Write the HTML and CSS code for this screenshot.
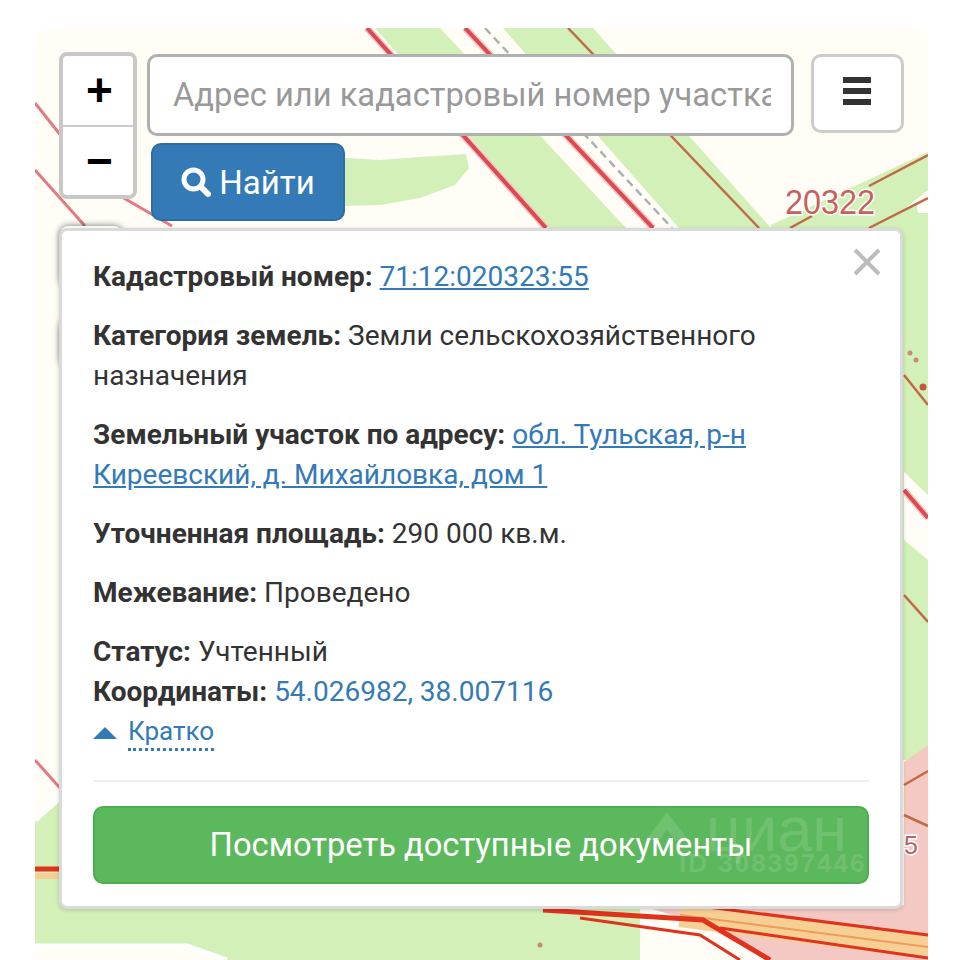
FILE: index.html
```html
<!DOCTYPE html>
<html lang="ru">
<head>
<meta charset="utf-8">
<title>Кадастровая карта</title>
<link rel="stylesheet" href="styles.css">
</head>
<body>
<main class="map">
  <svg class="map-art" viewBox="35 28 893 932" width="893" height="932" aria-hidden="true">
    <g class="green">
      <polygon points="375,28 440,28 626,228 549,228"/>
      <polygon points="503,28 593,28 771,228 679,228"/>
      <polygon points="345,158 380,160 420,157 466,154 469,168 455,185 420,198 380,205 345,206"/>
      <polygon points="771,225 928,152 928,190 880,228 771,228"/>
      <polygon points="870,228 928,196 928,760 870,760"/>
      <polygon points="35,820 60,795 60,960 35,960"/>
      <polygon points="35,905 640,905 640,960 35,960"/>
    </g>
    <polygon class="cream" points="904,472 928,495 928,560 904,540"/>
    <polygon class="cream" points="916,200 928,192 928,213 918,213"/>
    <polygon class="cream" points="35,945 187,945 227,960 35,960"/>
    <polygon class="pink" points="904,762 928,745 928,960 770,960 703,925 640,905 904,905"/>
    <polygon class="cream" points="639,925 706,938 766,960 648,960"/>
    <g class="halo">
      <line x1="367" y1="28" x2="546" y2="228"/>
      <line x1="465" y1="28" x2="653" y2="228"/>
      <line x1="904" y1="490" x2="928" y2="518"/>
    </g>
    <g class="red">
      <line x1="367" y1="28" x2="546" y2="228"/>
      <line x1="465" y1="28" x2="653" y2="228"/>
      <line x1="904" y1="490" x2="928" y2="518"/>
      <line class="thin" x1="35" y1="103" x2="62" y2="137"/>
      <line class="thin" x1="35" y1="170" x2="85" y2="226"/>
      <line class="thin" x1="122" y1="197" x2="172" y2="226"/>
      <line class="thin" x1="35" y1="760" x2="60" y2="788"/>
    </g>
    <line class="dash" x1="476" y1="28" x2="663" y2="228"/>
    <g class="brown">
      <line x1="568" y1="28" x2="759" y2="228"/>
      <line x1="869" y1="186" x2="928" y2="155"/>
      <line x1="869" y1="228" x2="928" y2="198"/>
      <line x1="790" y1="228" x2="812" y2="216"/>
      <line x1="904" y1="375" x2="928" y2="405"/>
      <line x1="904" y1="595" x2="928" y2="622"/>
      <line x1="904" y1="785" x2="928" y2="771"/>
      <line x1="904" y1="815" x2="928" y2="826"/>
    </g>
    <circle class="dot" cx="910" cy="353" r="2.5"/>
    <circle class="dot" cx="916" cy="360" r="2.5"/>
    <circle class="dot dot-strong" cx="923" cy="387" r="3.5"/>
    <circle class="dot" cx="540" cy="945" r="2.5"/>
    <polyline class="white-road" points="35,820 60,798"/>
    <polyline class="white-road" points="35,946 187,946 227,960"/>
    <polyline class="road-edge" points="35,869 60,869"/>
    <polyline class="road-orange" points="35,876 60,876"/>
    <polyline class="road-orange wide" points="680,915 928,947"/>
    <polyline class="road-stripe" points="680,915 928,947"/>
    <polyline class="road-edge" points="543,910 703,920 770,960"/>
    <polyline class="road-edge slim" points="580,918 700,935 740,960"/>
    <polyline class="road-edge slim" points="700,906 928,935"/>
    <polyline class="road-edge slim" points="720,928 928,958"/>
    <text class="map-label" x="785" y="214" textLength="90" lengthAdjust="spacingAndGlyphs">20322</text>
    <text class="map-label small" x="904" y="854">5</text>
  </svg>

  <div class="ghost ghost-top"></div>
  <div class="ghost ghost-mid"></div>

  <div class="overlay">
    <div class="controls">
      <div class="zoom">
        <button class="zoom-btn" type="button">+</button>
        <button class="zoom-btn" type="button">−</button>
      </div>
      <form class="search">
        <div class="search-row">
          <input class="search-input" type="text" placeholder="Адрес или кадастровый номер участка">
          <button class="menu-btn" type="button" aria-label="Меню">
            <svg viewBox="0 0 28 28" width="28" height="28"><path class="menu-icon" d="M0 0h28v6H0zM0 11h28v6H0zM0 22h28v6H0z"/></svg>
          </button>
        </div>
        <button class="find-btn" type="button">
          <svg viewBox="0 0 30 30" width="30" height="30"><circle class="find-ring" cx="12.5" cy="12.5" r="9.5"/><line class="find-handle" x1="19.5" y1="19.5" x2="27" y2="27"/></svg>
          Найти
        </button>
      </form>
    </div>

    <section class="popup">
      <button class="close" type="button" aria-label="Закрыть">
        <svg viewBox="0 0 28 28" width="28" height="28"><path class="close-icon" d="M2 2l24 24M26 2L2 26"/></svg>
      </button>
      <p class="field"><b>Кадастровый номер:</b> <a class="link" href="#">71:12:020323:55</a></p>
      <p class="field"><b>Категория земель:</b> Земли сельскохозяйственного назначения</p>
      <p class="field"><b>Земельный участок по адресу:</b> <a class="link" href="#">обл. Тульская, р-н Киреевский, д. Михайловка, дом 1</a></p>
      <p class="field"><b>Уточненная площадь:</b> 290 000 кв.м.</p>
      <p class="field"><b>Межевание:</b> Проведено</p>
      <p class="field tight"><b>Статус:</b> Учтенный</p>
      <p class="field tight"><b>Координаты:</b> <span class="coords">54.026982, 38.007116</span></p>
      <p class="toggle">
        <svg viewBox="0 0 24 12" width="24" height="12"><polygon class="toggle-arrow" points="12,0 24,12 0,12"/></svg>
        <a class="toggle-link" href="#">Кратко</a>
      </p>
      <hr class="rule">
      <button class="docs-btn" type="button">Посмотреть доступные документы</button>
      <div class="watermark">
        <svg viewBox="0 0 42 28" width="42" height="28"><polygon class="wm-roof" points="21,0 42,28 29,28 21,18 13,28 0,28"/></svg>
        <span class="wm-name">циан</span>
        <span class="wm-id">ID 308397446</span>
      </div>
    </section>
  </div>
</main>
</body>
</html>
```

FILE: styles.css
```css
* { box-sizing: border-box; }

html, body { height: 100%; }

body {
  margin: 0;
  background: #fff;
  font-family: Roboto, "Noto Sans", sans-serif;
  color: #333;
  overflow: hidden;
}

.map {
  position: relative;
  width: 893px;
  height: 932px;
  margin: 28px 0 0 35px;
  background: #fffdf6;
  border-radius: 16px 16px 0 0;
  overflow: hidden;
}

.map-art { position: absolute; inset: 0; display: block; }

.green polygon { fill: #d2f0b8; }
.cream { fill: #fffdf6; }
.pink { fill: #f4c9c4; }

.halo line { stroke: #f3c4c4; stroke-width: 7; }
.red line { stroke: #dc4a50; stroke-width: 4; }
.red line.thin { stroke: #e07c80; stroke-width: 3; }
.dash { stroke: #a9b2b4; stroke-width: 2.5; stroke-dasharray: 8 5; transform: translate(9px, 0); }
.brown line { stroke: #bf6a48; stroke-width: 2.5; }
.dot { fill: #c98a72; }
.dot-strong { fill: #c7553f; }

.white-road { fill: none; stroke: #fff; stroke-width: 5; }
.road-edge { fill: none; stroke: #e0321c; stroke-width: 5; }
.road-edge.slim { stroke-width: 3; }
.road-orange { fill: none; stroke: #f6cf95; stroke-width: 6; }
.road-orange.wide { stroke-width: 24; }
.road-stripe { fill: none; stroke: #ee9c58; stroke-width: 2; }

.map-label {
  font-family: "Liberation Sans", sans-serif;
  font-size: 35px;
  fill: #c8605c;
  stroke: #fff;
  stroke-width: 3px;
  paint-order: stroke;
}
.map-label.small { font-size: 25px; fill: #a76a6a; }

.ghost {
  position: absolute;
  left: 25px;
  width: 62px;
  background: #fff;
  border-radius: 8px;
  box-shadow: 0 0 7px rgba(0, 0, 0, .55);
}
.ghost-top { top: 198px; height: 60px; }
.ghost-mid { top: 292px; height: 46px; }

.overlay {
  position: absolute;
  inset: 0;
  padding: 24px 24px 0;
  display: flex;
  flex-direction: column;
  gap: 7px;
}

.controls { display: flex; gap: 10px; align-items: flex-start; height: 169px; }

.zoom {
  width: 78px;
  height: 147px;
  background: #fff;
  border: 4px solid #c8c8c6;
  border-radius: 8px;
  display: flex;
  flex-direction: column;
  flex: none;
}

.zoom-btn {
  flex: 1;
  border: 0;
  background: none;
  padding: 0 0 0 3px;
  font-family: "Liberation Sans", sans-serif;
  font-size: 46px;
  font-weight: 700;
  line-height: 1;
  color: #000;
}
.zoom-btn:first-child { border-bottom: 2px solid #ccc; }

.search { flex: 1; margin-top: 2px; }

.search-row { display: flex; gap: 17px; align-items: flex-start; }

.search-input {
  flex: 1;
  min-width: 0;
  height: 82px;
  padding: 0 20px 0 23px;
  border: 3px solid #b0b0b0;
  border-radius: 10px;
  background: #fff;
  font: 400 32.7px Roboto, sans-serif;
  color: #555;
}
.search-input::placeholder { color: #999; opacity: 1; }

.menu-btn {
  width: 93px;
  height: 79px;
  flex: none;
  border: 3px solid #ccc;
  border-radius: 10px;
  background: #fff;
  display: flex;
  align-items: center;
  justify-content: center;
  padding: 0 2px 6px 0;
}
.menu-icon { fill: #333; }

.find-btn {
  margin: 7px 0 0 4px;
  width: 194px;
  height: 78px;
  border: 2px solid #2e6da4;
  border-radius: 10px;
  background: #337ab7;
  color: #fff;
  font: 400 33px Roboto, sans-serif;
  display: flex;
  align-items: center;
  justify-content: center;
  gap: 8px;
}
.find-ring, .find-handle { fill: none; stroke: #fff; }
.find-ring { stroke-width: 5; }
.find-handle { stroke-width: 6; stroke-linecap: round; }

.popup {
  position: relative;
  width: 844px;
  height: 681px;
  padding: 26px 31px 0;
  background: #fff;
  border: 3px solid #dadada;
  border-radius: 8px;
  box-shadow: 0 1px 4px rgba(0, 0, 0, .18);
  overflow: hidden;
  font-size: 28px;
  line-height: 40px;
}

.close {
  position: absolute;
  top: 17px;
  right: 19px;
  padding: 0;
  border: 0;
  background: none;
  display: block;
  line-height: 0;
}
.close-icon { fill: none; stroke: #bcbcbc; stroke-width: 4; }

.field { margin: 0 0 19px; }
.field.tight { margin-bottom: 0; }

.link { color: #337ab7; text-decoration: underline; }
.coords { color: #337ab7; }

.toggle {
  margin: 2px 0 0;
  display: flex;
  align-items: center;
  gap: 11px;
  font-size: 26px;
}
.toggle-arrow { fill: #337ab7; }
.toggle-link {
  color: #337ab7;
  text-decoration: none;
  line-height: 34px;
  border-bottom: 3px dotted #337ab7;
}

.rule { margin: 29px 0 24px; border: 0; border-top: 2px solid #eee; }

.docs-btn {
  display: block;
  width: 100%;
  height: 78px;
  border: 2px solid #4cae4c;
  border-radius: 10px;
  background: #5cb85c;
  color: #fff;
  font: 400 32.7px Roboto, sans-serif;
}

.watermark {
  position: absolute;
  left: 584px;
  top: 568px;
  width: 240px;
  height: 80px;
  color: rgba(255, 255, 255, .12);
  pointer-events: none;
}
.watermark svg { position: absolute; left: 0; top: 13px; }
.wm-roof { fill: rgba(255, 255, 255, .12); }
.wm-name {
  position: absolute;
  left: 60px;
  top: 0;
  font: 400 63px/60px "Liberation Sans", sans-serif;
}
.wm-id {
  position: absolute;
  left: 33px;
  top: 52px;
  font: 700 26px/24px "Liberation Sans", sans-serif;
  letter-spacing: 2px;
  white-space: nowrap;
}
```
